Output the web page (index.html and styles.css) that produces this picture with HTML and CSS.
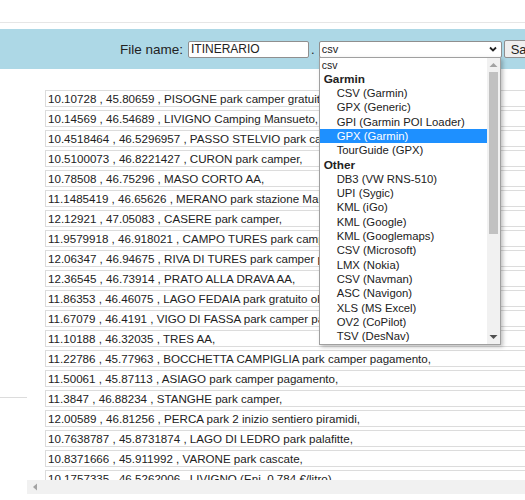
FILE: index.html
```html
<!DOCTYPE html>
<html lang="it">
<head>
    <meta charset="UTF-8">
    <title>Esporta itinerario</title>
    <link rel="stylesheet" href="styles.css">
</head>
<body>
    <div class="topbar"></div>

    <!-- barra salvataggio -->
    <div class="band">
        <label class="label" for="fname">File name:</label>
        <div class="fname" id="fname">ITINERARIO</div>
        <span class="dot">.</span>
        <div class="select-wrap">
            <div class="select">
                <span>csv</span>
                <svg class="chev" width="8" height="6" viewBox="0 0 8 6"><polyline points="1,1.5 4,4.5 7,1.5" fill="none" stroke="#222" stroke-width="1.8"/></svg>
            </div>
            <div class="dropdown">
                <div class="opts">
                    <div class="opt top">csv</div>
                    <div class="group">Garmin</div>
                    <div class="opt">CSV (Garmin)</div>
                    <div class="opt">GPX (Generic)</div>
                    <div class="opt">GPI (Garmin POI Loader)</div>
                    <div class="opt selected">GPX (Garmin)</div>
                    <div class="opt">TourGuide (GPX)</div>
                    <div class="group">Other</div>
                    <div class="opt">DB3 (VW RNS-510)</div>
                    <div class="opt">UPI (Sygic)</div>
                    <div class="opt">KML (iGo)</div>
                    <div class="opt">KML (Google)</div>
                    <div class="opt">KML (Googlemaps)</div>
                    <div class="opt">CSV (Microsoft)</div>
                    <div class="opt">LMX (Nokia)</div>
                    <div class="opt">CSV (Navman)</div>
                    <div class="opt">ASC (Navigon)</div>
                    <div class="opt">XLS (MS Excel)</div>
                    <div class="opt">OV2 (CoPilot)</div>
                    <div class="opt">TSV (DesNav)</div>
                </div>
                <div class="vscroll">
                    <svg class="arrow" width="9" height="6" viewBox="0 0 9 6"><polygon points="0.5,5 4.5,1 8.5,5" fill="#a3a3a3"/></svg>
                    <div class="thumb"></div>
                    <svg class="arrow down" width="9" height="6" viewBox="0 0 9 6"><polygon points="0.5,1 4.5,5 8.5,1" fill="#505050"/></svg>
                </div>
            </div>
        </div>
        <button class="save">Save</button>
    </div>

    <div class="main">
        <div class="aside"><div class="aside-line"></div></div>
        <div class="list-wrap">
            <div class="list">
                <div class="row">10.10728 , 45.80659 , PISOGNE park camper gratuito,</div>
                <div class="row">10.14569 , 46.54689 , LIVIGNO Camping Mansueto,</div>
                <div class="row">10.4518464 , 46.5296957 , PASSO STELVIO park camper,</div>
                <div class="row">10.5100073 , 46.8221427 , CURON park camper,</div>
                <div class="row">10.78508 , 46.75296 , MASO CORTO AA,</div>
                <div class="row">11.1485419 , 46.65626 , MERANO park stazione Maia,</div>
                <div class="row">12.12921 , 47.05083 , CASERE park camper,</div>
                <div class="row">11.9579918 , 46.918021 , CAMPO TURES park camper,</div>
                <div class="row">12.06347 , 46.94675 , RIVA DI TURES park camper pagamento,</div>
                <div class="row">12.36545 , 46.73914 , PRATO ALLA DRAVA AA,</div>
                <div class="row">11.86353 , 46.46075 , LAGO FEDAIA park gratuito ok,</div>
                <div class="row">11.67079 , 46.4191 , VIGO DI FASSA park camper pagamento,</div>
                <div class="row">11.10188 , 46.32035 , TRES AA,</div>
                <div class="row">11.22786 , 45.77963 , BOCCHETTA CAMPIGLIA park camper pagamento,</div>
                <div class="row">11.50061 , 45.87113 , ASIAGO park camper pagamento,</div>
                <div class="row">11.3847 , 46.88234 , STANGHE park camper,</div>
                <div class="row">12.00589 , 46.81256 , PERCA park 2 inizio sentiero piramidi,</div>
                <div class="row">10.7638787 , 45.8731874 , LAGO DI LEDRO park palafitte,</div>
                <div class="row">10.8371666 , 45.911992 , VARONE park cascate,</div>
                <div class="row">10.1757335 , 46.5262006 , LIVIGNO (Eni, 0.784 €/litro)</div>
            </div>
            <div class="hscroll">
                <svg width="6" height="8" viewBox="0 0 6 8"><polygon points="5,0.5 1,4 5,7.5" fill="#a3a3a3"/></svg>
            </div>
        </div>
    </div>
</body>
</html>
```

FILE: styles.css
```css
* {
    margin: 0;
    padding: 0;
    box-sizing: border-box;
}

body {
    font-family: 'Liberation Sans', Arial, sans-serif;
    color: #222;
    background: #fff;
    overflow: hidden;
    width: 525px;
    height: 500px;
}

.topbar {
    height: 23px;
    border-bottom: 1px solid #e6e6e6;
    margin-bottom: 6px;
}

/* barra salvataggio */
.band {
    height: 40px;
    background: #add8e6;
    display: flex;
    align-items: center;
    padding-left: 120px;
    white-space: nowrap;
    overflow: visible;
}

.band > * {
    flex: none;
}

.label {
    font-size: 13.5px;
    color: #222;
    margin-right: 5px;
}

.fname {
    width: 121px;
    height: 17px;
    background: #fff;
    border: 1px solid #8f8f8f;
    border-radius: 2px;
    font-size: 12px;
    line-height: 15px;
    padding-left: 2px;
}

.dot {
    font-size: 13px;
    margin: 0 4px 0 2px;
}

.select-wrap {
    position: relative;
}

.select {
    width: 183px;
    height: 17px;
    background: #fff;
    border: 1px solid #8f8f8f;
    border-radius: 2px;
    font-size: 11px;
    line-height: 16px;
    padding-left: 2px;
    display: flex;
    justify-content: space-between;
    align-items: center;
}

.chev {
    margin-right: 4px;
}

.save {
    margin-left: 2px;
    height: 18px;
    padding: 0 6px;
    font-family: inherit;
    font-size: 13px;
    color: #222;
    background: #efefef;
    border: 1px solid #8f8f8f;
    border-radius: 2px;
}

/* lista aperta del select */
.dropdown {
    position: absolute;
    top: 16px;
    left: 0;
    width: 182px;
    height: 288px;
    background: #fff;
    border: 1px solid #a0a0a0;
    box-shadow: 2px 2px 4px rgba(0,0,0,0.25);
    display: flex;
    z-index: 5;
}

.opts {
    flex: 1;
}

.opt,
.group {
    height: 14.3px;
    line-height: 14.3px;
    font-size: 11.3px;
    padding-left: 17px;
}

.opt.top {
    padding-left: 2px;
    font-size: 10.5px;
}

.group {
    font-weight: bold;
    font-size: 11.8px;
    padding-left: 4px;
}

.opt.selected {
    background: #1e90ff;
    color: #fff;
}

.vscroll {
    width: 13px;
    background: #f1f1f1;
    display: flex;
    flex-direction: column;
    align-items: center;
    padding-top: 4px;
}

.thumb {
    width: 9px;
    height: 162px;
    background: #c1c1c1;
    margin-top: 4px;
}

.arrow.down {
    margin-top: auto;
    margin-bottom: 4px;
}

/* lista punti */
.main {
    display: flex;
}

.aside {
    flex: none;
    width: 27px;
}

.aside-line {
    height: 1px;
    background: #dcdcdc;
    margin-top: 328px;
}

.list-wrap {
    flex: none;
    width: 498px;
}

.list {
    height: 411px;
    overflow: hidden;
    padding: 21px 0 0 18px;
    display: flex;
    flex-direction: column;
    gap: 3px;
}

.row {
    flex: none;
    width: 600px;
    height: 17px;
    border: 1px solid #dcdcdc;
    font-size: 11.6px;
    line-height: 15px;
    padding-left: 2px;
    white-space: nowrap;
}

.hscroll {
    height: 14px;
    background: #f1f1f1;
    display: flex;
    align-items: center;
    padding-left: 5px;
}
```
